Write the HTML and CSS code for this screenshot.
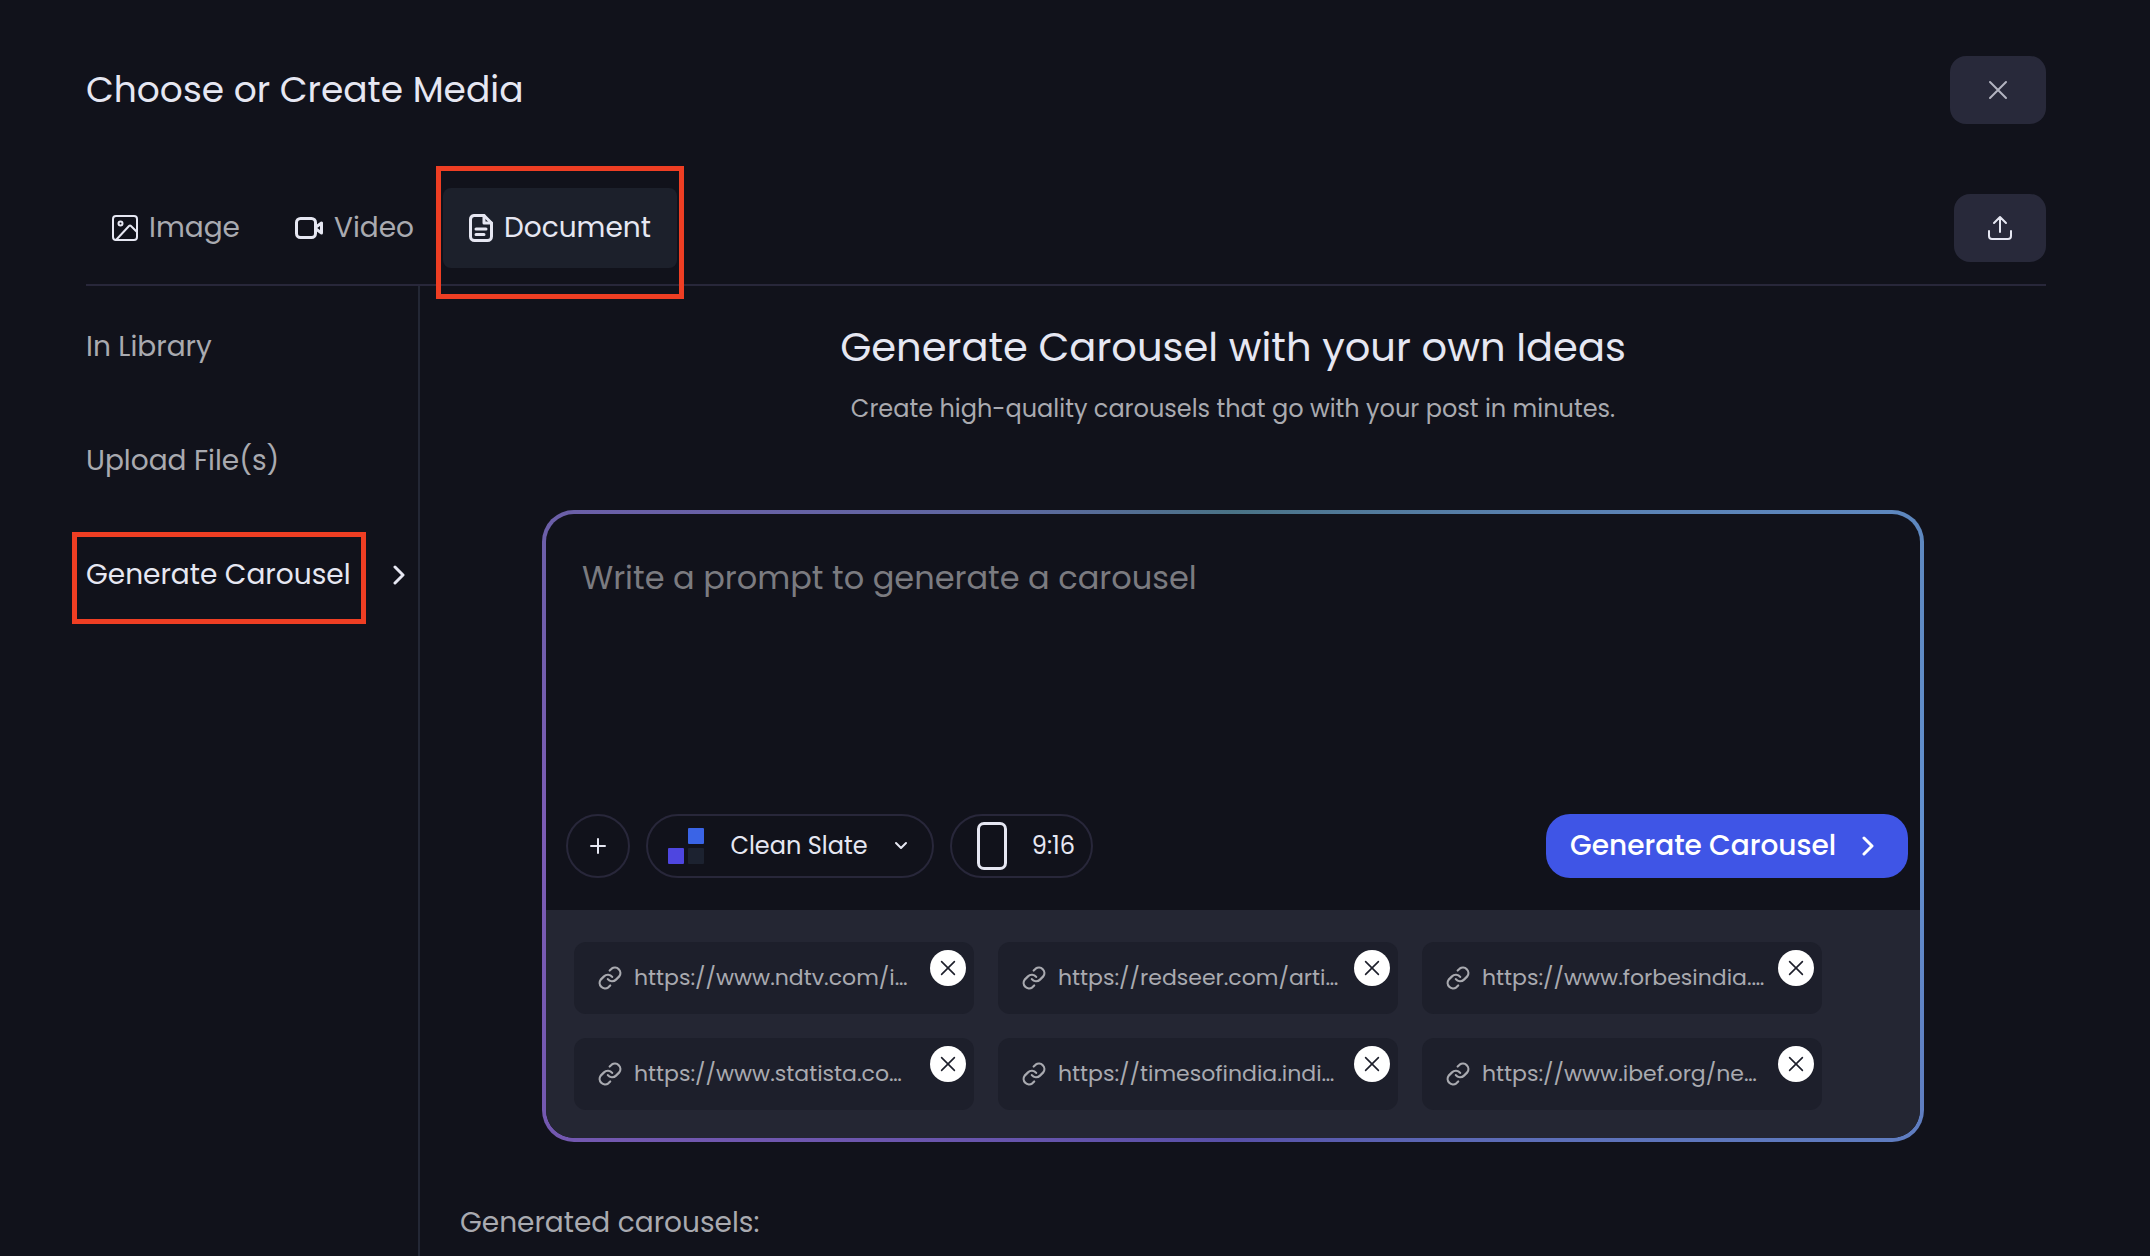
FILE: index.html
```html
<!DOCTYPE html>
<html lang="en">
<head>
  <meta charset="UTF-8">
  <meta name="viewport" content="width=device-width, initial-scale=1">
  <title>Choose or Create Media</title>
  <link rel="stylesheet" href="styles.css">
</head>
<body>
  <!-- shared icons -->
  <svg class="sprite" aria-hidden="true">
    <symbol id="icon-close" viewBox="0 0 20 20">
      <path d="M2 2l16 16M18 2L2 18"/>
    </symbol>
    <symbol id="icon-chevron" viewBox="0 0 12 20">
      <path d="M2 2l8 8-8 8"/>
    </symbol>
    <symbol id="icon-link" viewBox="1 1 22 22">
      <path d="M10 13a5 5 0 0 0 7.500.5l3-3a5 5 0 0 0-7-7l-1.800 1.700"/>
      <path d="M14 11a5 5 0 0 0-7.500-.5l-3 3a5 5 0 0 0 7 7l1.700-1.700"/>
    </symbol>
  </svg>

  <div class="page">
    <header class="header">
      <h1>Choose or Create Media</h1>
      <button class="icon-btn close-btn" type="button" aria-label="Close">
        <svg class="icon" width="20" height="20"><use href="#icon-close"/></svg>
      </button>
    </header>

    <nav class="tabs">
      <button class="tab" type="button">
        <svg class="icon" width="26" height="26" viewBox="0 0 26 26">
          <rect x="1" y="1" width="24" height="24" rx="3"/>
          <circle cx="8.500" cy="8.500" r="2"/>
          <path d="M4 25L17 11q1-1 2 0l6 6"/>
        </svg>
        Image
      </button>
      <button class="tab" type="button">
        <svg class="icon thick" width="28" height="26" viewBox="0 0 28 26">
          <rect x="1.500" y="3.500" width="19" height="19" rx="4"/>
          <path d="M21 12l5.500-4v10l-5.500-4z"/>
        </svg>
        Video
      </button>
      <button class="tab active" type="button">
        <svg class="icon thick" width="24" height="28" viewBox="0 0 24 28">
          <path d="M5 1.500h10l7.500 7.500v13.500a4 4 0 0 1-4 4h-13a4 4 0 0 1-4-4v-17a4 4 0 0 1 3.500-4z"/>
          <path d="M15 1.500V9h7.500M7 15h10M7 20.500h8"/>
        </svg>
        Document
        <span class="mark mark-tab"></span>
      </button>
      <button class="icon-btn upload-btn" type="button" aria-label="Upload">
        <svg class="icon" width="26" height="26" viewBox="0 0 26 26">
          <path d="M13 17V3M7 8l6-6 6 6M2 16v5a3 3 0 0 0 3 3h16a3 3 0 0 0 3-3v-5"/>
        </svg>
      </button>
    </nav>

    <div class="content">
      <aside class="sidebar">
        <a href="#">In Library</a>
        <a href="#">Upload File(s)</a>
        <a class="active" href="#">
          <span class="label">Generate Carousel<span class="mark mark-side"></span></span>
          <svg class="icon thick" width="12" height="20"><use href="#icon-chevron"/></svg>
        </a>
      </aside>

      <main class="main">
        <h2>Generate Carousel with your own Ideas</h2>
        <p class="subtitle">Create high-quality carousels that go with your post in minutes.</p>

        <form class="prompt">
          <div class="prompt-inner">
            <textarea aria-label="Prompt" placeholder="Write a prompt to generate a carousel"></textarea>
            <div class="toolbar">
              <button class="pill add" type="button" aria-label="Add">
                <svg class="icon" width="18" height="18" viewBox="0 0 18 18"><path d="M9 2v14M2 9h14"/></svg>
              </button>
              <button class="pill theme" type="button">
                <span class="swatch"><i></i><i class="blue"></i><i class="violet"></i><i class="dark"></i></span>
                Clean Slate
                <svg class="icon" width="14" height="10" viewBox="0 0 14 10"><path d="M2 2l5 5 5-5"/></svg>
              </button>
              <button class="pill ratio" type="button">
                <span class="phone"></span>
                9:16
              </button>
              <button class="generate" type="button">
                Generate Carousel
                <svg class="icon thick" width="12" height="20"><use href="#icon-chevron"/></svg>
              </button>
            </div>

            <div class="links">
              <div class="link">
                <svg class="icon" width="24" height="24"><use href="#icon-link"/></svg>
                <span>https://www.ndtv.com/i…</span>
                <button type="button" aria-label="Remove"><svg class="icon" width="16" height="16"><use href="#icon-close"/></svg></button>
              </div>
              <div class="link">
                <svg class="icon" width="24" height="24"><use href="#icon-link"/></svg>
                <span>https://redseer.com/arti…</span>
                <button type="button" aria-label="Remove"><svg class="icon" width="16" height="16"><use href="#icon-close"/></svg></button>
              </div>
              <div class="link">
                <svg class="icon" width="24" height="24"><use href="#icon-link"/></svg>
                <span>https://www.forbesindia.…</span>
                <button type="button" aria-label="Remove"><svg class="icon" width="16" height="16"><use href="#icon-close"/></svg></button>
              </div>
              <div class="link">
                <svg class="icon" width="24" height="24"><use href="#icon-link"/></svg>
                <span>https://www.statista.co…</span>
                <button type="button" aria-label="Remove"><svg class="icon" width="16" height="16"><use href="#icon-close"/></svg></button>
              </div>
              <div class="link">
                <svg class="icon" width="24" height="24"><use href="#icon-link"/></svg>
                <span>https://timesofindia.indi…</span>
                <button type="button" aria-label="Remove"><svg class="icon" width="16" height="16"><use href="#icon-close"/></svg></button>
              </div>
              <div class="link">
                <svg class="icon" width="24" height="24"><use href="#icon-link"/></svg>
                <span>https://www.ibef.org/ne…</span>
                <button type="button" aria-label="Remove"><svg class="icon" width="16" height="16"><use href="#icon-close"/></svg></button>
              </div>
            </div>
          </div>
        </form>

        <p class="generated">Generated carousels:</p>
      </main>
    </div>
  </div>
</body>
</html>
```

FILE: styles.css
```css
* {
  box-sizing: border-box;
}
body {
  margin: 0;
  background: #11121b;
  color: #e6e7f2;
  font-family: Poppins, Inter, sans-serif;
  font-size: 28px;
  line-height: 42px;
}
h1, h2, p {
  margin: 0;
  font-weight: 400;
}
button, textarea {
  font: inherit;
  color: inherit;
  background: none;
  border: 0;
  padding: 0;
}
button {
  display: flex;
  align-items: center;
  white-space: nowrap;
}
a {
  color: inherit;
  text-decoration: none;
}
.sprite {
  display: none;
}
.icon {
  flex: none;
  fill: none;
  stroke: currentColor;
  stroke-width: 2;
  stroke-linecap: round;
  stroke-linejoin: round;
}
.icon.thick {
  stroke-width: 3;
}
.page {
  display: flex;
  flex-direction: column;
  min-height: 100vh;
  padding: 56px 104px 0 86px;
}

/* header */
.header {
  display: flex;
  justify-content: space-between;
  align-items: center;
}
h1 {
  font-size: 36px;
}
.icon-btn {
  justify-content: center;
  height: 68px;
  border-radius: 16px;
  background: #28293a;
}
.close-btn {
  width: 96px;
  color: #b3b4c0;
}
.upload-btn {
  width: 92px;
  margin-left: auto;
}

/* tabs */
.tabs {
  display: flex;
  align-items: center;
  gap: 3px;
  margin-top: 64px;
  padding-bottom: 16px;
  border-bottom: 2px solid #28273a;
}
.tab {
  position: relative;
  gap: 11px;
  height: 80px;
  padding: 0 26px;
  border-radius: 8px;
  color: #a9aab0;
}
.tab .icon {
  color: #e6e7f2;
}
.tab.active {
  background: #1c202b;
  color: #e6e7f2;
}

/* red highlight frames */
.mark {
  position: absolute;
  border: 5px solid #ef3e23;
  pointer-events: none;
}
.mark-tab {
  inset: -22px -7px -31px;
}
.mark-side {
  inset: -22px -15px -28px -14px;
}

.content {
  display: flex;
  flex: 1;
}
.sidebar {
  display: flex;
  flex-direction: column;
  gap: 72px;
  width: 334px;
  padding: 40px 13px 0 0;
  border-right: 2px solid #232735;
  color: #a9aab0;
}
.sidebar a {
  display: flex;
  align-items: center;
  justify-content: space-between;
}
.sidebar .active {
  color: #e6e7f2;
}
.label {
  position: relative;
  white-space: nowrap;
}

/* main */
.main {
  flex: 1;
  padding-top: 29px;
  text-align: center;
}
h2 {
  font-size: 40px;
  line-height: 64px;
}
.subtitle {
  margin: 12px 0 83px;
  font-size: 24px;
  line-height: 36px;
  color: #a9aab0;
}
.prompt {
  width: 85%;
  margin: 0 auto;
  padding: 4px;
  border-radius: 32px;
  background: conic-gradient(#4a7386, #5b82b4 50deg, #6290d0 90deg, #5f7cc0 115deg, #5850a8 180deg, #7358b0 245deg, #7c5cb5 270deg, #6b5fa8 295deg, #5d69a0 325deg, #4a7386);
}
.prompt-inner {
  overflow: hidden;
  border-radius: 28px;
  background: #11121b;
}
textarea {
  display: block;
  width: 100%;
  height: 300px;
  padding: 40px 36px;
  font-size: 32px;
  line-height: 48px;
  resize: none;
  outline: none;
}
textarea::placeholder {
  color: #7b7b80;
}
.toolbar {
  display: flex;
  gap: 16px;
  padding: 0 12px 32px 20px;
}
.pill {
  height: 64px;
  border: 2px solid #28273a;
  border-radius: 32px;
  font-size: 24px;
}
.add {
  justify-content: center;
  width: 64px;
}
.theme {
  justify-content: space-between;
  width: 288px;
  padding: 0 24px 0 20px;
}
.swatch {
  display: grid;
  grid-template-columns: 16px 16px;
  grid-auto-rows: 16px;
  gap: 4px;
}
.swatch i {
  border-radius: 1px;
}
.swatch .blue {
  background: #3a64e6;
}
.swatch .violet {
  background: #4e46e0;
}
.swatch .dark {
  background: #1c2230;
}
.ratio {
  justify-content: space-between;
  width: 143px;
  padding: 0 16px 0 25px;
}
.phone {
  width: 30px;
  height: 48px;
  border: 3px solid #e6e7f2;
  border-radius: 7px;
}
.generate {
  justify-content: space-between;
  width: 362px;
  height: 64px;
  margin-left: auto;
  padding: 0 34px 0 24px;
  border-radius: 24px;
  background: #3f55e6;
  color: #fff;
  font-weight: 500;
}

/* source links */
.links {
  display: flex;
  flex-wrap: wrap;
  gap: 24px;
  padding: 32px 28px 28px;
  background: #242633;
}
.link {
  position: relative;
  display: flex;
  align-items: center;
  gap: 12px;
  width: 400px;
  height: 72px;
  padding-left: 24px;
  border-radius: 12px;
  background: #1d1f2b;
  color: #a9aab0;
  font-size: 22px;
}
.link button {
  position: absolute;
  top: 8px;
  right: 8px;
  justify-content: center;
  width: 36px;
  height: 36px;
  border-radius: 50%;
  background: #fff;
  color: #1d1f2b;
}
.generated {
  margin-top: 60px;
  padding-left: 40px;
  text-align: left;
  color: #a9aab0;
}
```
